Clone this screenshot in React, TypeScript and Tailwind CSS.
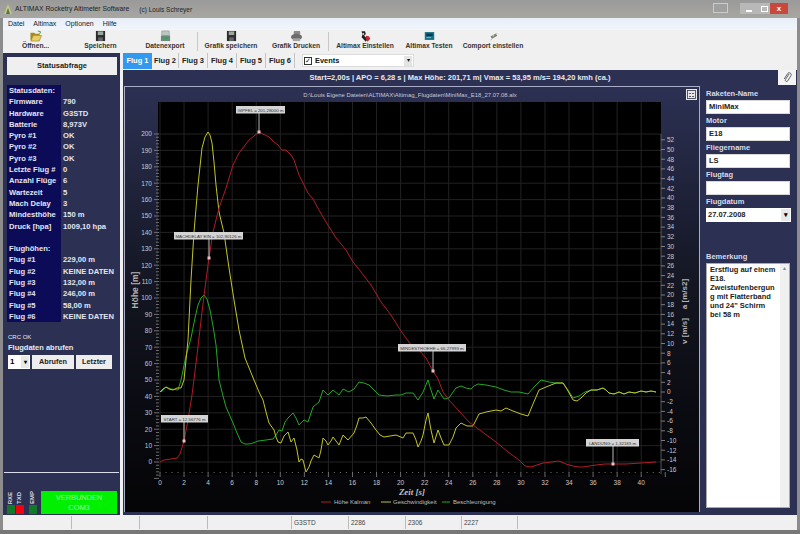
import React from 'react';

const toolbarItems = [
  { label: 'Öffnen...', icon: 'open', w: 'w-[65px]' },
  { label: 'Speichern', icon: 'save', w: 'w-[65px]' },
  { label: 'Datenexport', icon: 'export', w: 'w-[64px]' },
  { label: 'Grafik speichern', icon: 'save', w: 'w-[66px]', sep: true },
  { label: 'Grafik Drucken', icon: 'print', w: 'w-[64px]' },
  { label: 'Altimax Einstellen', icon: 'setup', w: 'w-[72px]', sep: true },
  { label: 'Altimax Testen', icon: 'test', w: 'w-[56px]' },
  { label: 'Comport einstellen', icon: 'port', w: 'w-[72px]' },
];

const statusRows: [string, string][] = [
  ['Statusdaten:', ''],
  ['Firmware', '790'],
  ['Hardware', 'G3STD'],
  ['Batterie', '8,973V'],
  ['Pyro #1', 'OK'],
  ['Pyro #2', 'OK'],
  ['Pyro #3', 'OK'],
  ['Letzte Flug #', '0'],
  ['Anzahl Flüge', '6'],
  ['Wartezeit', '5'],
  ['Mach Delay', '3'],
  ['Mindesthöhe', '150 m'],
  ['Druck [hpa]', '1009,10 hpa'],
  ['', ''],
  ['Flughöhen:', ''],
  ['Flug #1', '229,00 m'],
  ['Flug #2', 'KEINE DATEN'],
  ['Flug #3', '132,00 m'],
  ['Flug #4', '246,00 m'],
  ['Flug #5', '58,00 m'],
  ['Flug #6', 'KEINE DATEN'],
];

const fields = [
  { label: 'Raketen-Name', value: 'MiniMax' },
  { label: 'Motor', value: 'E18' },
  { label: 'Fliegername', value: 'LS' },
  { label: 'Flugtag', value: '' },
];

const remark = ['Erstflug auf einem', 'E18.', 'Zweistufenbergun', 'g mit Flatterband', 'und 24" Schirm', 'bei 58 m'];

// kurven in pixel-koordinaten des screenshots
const red =
  '159,462 163,460 170,459 176,458 179,454 183,441 187,420 191,395 196,355 201,312 205,280 208,258 212,232 218,208 225,188 232,165 238,153 248,140 258,132 268,137 273,142 277,145 281,150 285,150 290,155 293,160 298,175 302,183 307,193 312,199 318,210 325,222 335,238 345,250 352,262 360,272 370,285 380,302 390,315 400,331 410,345 418,350 425,358 432,371 437,379 442,392 448,400 458,411 468,422 480,431 495,442 507,452 518,460 524,466 530,467 536,465 542,463 550,462 558,461 565,464 572,466 578,467 582,467 588,466 595,465 604,464 612,464 625,464 640,463 655,462';
const yellow =
  '159,392 162,389 165,387 168,389 172,390 176,388 180,388 183,380 187,340 190,280 193,232 197,185 201,148 204,137 207,132 209,135 211,143 213,162 215,185 218,212 223,233 228,268 233,300 238,330 244,358 253,380 258,392 262,400 265,412 268,423 273,430 275,437 277,442 280,443 283,436 287,432 290,442 293,438 296,450 298,462 300,459 302,460 304,468 305,472 308,467 310,461 313,455 318,458 320,450 322,438 325,441 327,445 330,441 332,437 335,441 338,445 342,435 347,440 353,433 356,425 358,418 362,418 365,417 370,423 375,430 379,435 383,437 389,436 395,435 402,438 405,433 412,433 415,440 417,447 420,441 422,435 425,420 427,413 430,430 433,443 437,430 440,438 443,445 448,445 452,437 455,428 460,423 466,426 472,426 475,420 478,414 485,412 495,410 500,411 505,408 512,411 520,414 527,416 532,404 538,390 545,387 555,383 562,383 567,391 572,400 576,401 580,398 585,393 590,390 596,390 602,388 605,390 608,393 613,394 618,392 623,394 628,392 634,393 640,391 645,392 650,391 655,392';
const green =
  '160,392 165,387 170,389 177,390 180,380 185,356 190,338 194,318 197,305 200,298 203,295 206,299 209,310 212,326 215,345 218,380 222,396 225,407 232,423 236,433 240,442 244,444 248,444 252,443 257,441 265,440 272,439 275,435 278,430 281,431 284,422 287,418 292,413 295,418 298,425 303,420 307,422 312,407 318,402 322,390 327,395 332,390 338,395 342,389 348,392 353,389 358,382 363,383 368,385 373,390 378,395 386,396 395,395 400,395 405,393 412,393 417,400 422,392 427,380 430,390 433,399 437,390 443,399 448,398 452,392 455,388 460,386 465,388 470,389 473,386 477,384 485,385 495,387 503,390 510,392 518,392 527,394 533,387 540,380 548,382 555,383 562,383 567,390 572,398 578,396 584,392 590,390 596,390 602,388 605,390 608,393 613,394 618,392 623,394 628,392 634,393 640,391 645,392 650,391 655,392';

const callouts = [
  { text: 'GIPFEL = 201,28000 m', x: 235, y: 106, w: 49, px: 258, py: 132 },
  { text: 'MACHDELAY EIN = 102,90126 m', x: 173, y: 232, w: 69, px: 208, py: 258 },
  { text: 'START = 12,56776 m', x: 160, y: 415, w: 47, px: 183, py: 441 },
  { text: 'MINDESTHOEHE = 66,27993 m', x: 397, y: 344, w: 68, px: 432, py: 371 },
  { text: 'LANDUNG = 1,32183 m', x: 585, y: 439, w: 53, px: 612, py: 464 },
];

const XS = Array.from({ length: 21 }, (_, i) => i * 2);
const LEFT = Array.from({ length: 21 }, (_, i) => i * 10);
const RIGHT = Array.from({ length: 35 }, (_, i) => -16 + i * 2);
const px = (s: number) => 159 + s * 12.03;
const pyL = (m: number) => 462 - m * 1.64;
const pyR = (v: number) => 392 - v * 4.85;

function ToolIcon({ name }: { name: string }) {
  if (name === 'open')
    return (
      <svg width="14" height="12" viewBox="0 0 14 13">
        <path d="M1 3h4l1 1h5v2H4L2 11H1z" fill="#a8891f" />
        <path d="M4 6h9l-2.5 6H1.5z" fill="#e8d060" stroke="#8a7420" strokeWidth=".6" />
        <path d="M9 1l3 1-1 2" fill="none" stroke="#3a9a3a" strokeWidth="1" />
      </svg>
    );
  if (name === 'save')
    return (
      <svg width="11" height="12" viewBox="0 0 12 13">
        <rect x="1" y="1" width="10" height="11" fill="#2c2c2c" />
        <rect x="3" y="1.5" width="6" height="4" fill="#9aa8a0" />
        <rect x="3.5" y="8" width="5" height="4" fill="#666" />
      </svg>
    );
  if (name === 'export')
    return (
      <svg width="11" height="12" viewBox="0 0 12 13">
        <rect x="2" y="1" width="8" height="5" fill="#b8c8c0" stroke="#777" strokeWidth=".5" />
        <rect x="1" y="6" width="10" height="6" fill="#6f8a7c" />
        <rect x="3" y="8" width="6" height="2" fill="#3f9a6a" />
      </svg>
    );
  if (name === 'print')
    return (
      <svg width="13" height="12" viewBox="0 0 14 13">
        <rect x="4" y="1" width="7" height="4" rx="1" fill="#8a8a8a" />
        <ellipse cx="7" cy="7.5" rx="6" ry="3.5" fill="#6c6c6c" />
        <rect x="3" y="9" width="8" height="3" fill="#a4a4a4" />
      </svg>
    );
  if (name === 'setup')
    return (
      <svg width="12" height="13" viewBox="0 0 14 14">
        <path d="M3 1h4l1 3-2 2 4 4-2 3-5-5 1-3z" fill="#222" />
        <path d="M8 6l4 1 1 3-3 3-2-3z" fill="#c8242a" />
        <path d="M4 3h2v2H4z" fill="#ddd" />
      </svg>
    );
  if (name === 'test')
    return (
      <svg width="11" height="10" viewBox="0 0 14 12">
        <rect x="1" y="1" width="12" height="10" fill="#16708a" />
        <rect x="3" y="3" width="8" height="3" fill="#0c3a4c" />
        <path d="M3 8h6" stroke="#7fd0e0" />
      </svg>
    );
  return (
    <svg width="11" height="9" viewBox="0 0 14 12">
      <path d="M3 6l7-4 2 3-7 4z" fill="#7a8070" />
      <path d="M5 9l-2 2M10 3l2-1" stroke="#b0b0a0" />
      <rect x="6" y="4" width="2" height="2" fill="#c0d060" />
    </svg>
  );
}

function Chart() {
  return (
    <svg viewBox="124 87 574 425" className="block h-[425px] w-[574px]" fontFamily="Liberation Sans, Arial, sans-serif">
      <rect x="157" y="102" width="503" height="373" fill="#000" />
      {XS.map((s) => (
        <line key={s} x1={px(s)} x2={px(s)} y1="102" y2="473" stroke="#222" strokeWidth="1" />
      ))}
      {LEFT.map((m) => (
        <line key={m} x1="157" x2="660" y1={pyL(m)} y2={pyL(m)} stroke="#222" strokeWidth="1" />
      ))}
      {/* achsen */}
      {Array.from({ length: 106 }, (_, i) => (
        <line key={i} x1={i % 5 === 0 ? 153 : 155} x2="158" y1={pyL(-10 + i * 2)} y2={pyL(-10 + i * 2)} stroke="#999" strokeWidth=".7" />
      ))}
      {Array.from({ length: 85 }, (_, i) => (
        <line key={i} x1={px(i / 2)} x2={px(i / 2)} y1={i % 4 === 0 ? 477 : 473} y2="472" stroke="#888" strokeWidth=".8" />
      ))}
      {RIGHT.map((v) => (
        <line key={v} x1="660" x2="664" y1={pyR(v)} y2={pyR(v)} stroke="#aaa" strokeWidth=".7" />
      ))}
      <line x1="660" x2="660" y1="134" y2="474" stroke="#777" strokeWidth=".7" />
      {LEFT.map((m) => (
        <text key={m} x="151" y={pyL(m) + 2.3} textAnchor="end" fontSize="6.5" fill="#c8c8c8">
          {m}
        </text>
      ))}
      {XS.map((s) => (
        <text key={s} x={px(s)} y="485" textAnchor="middle" fontSize="6.5" fill="#c8c8c8">
          {s}
        </text>
      ))}
      {RIGHT.map((v) => (
        <text key={v} x="666" y={pyR(v) + 2.3} fontSize="6.5" fill="#c8c8c8">
          {v}
        </text>
      ))}
      <polyline points={green} fill="none" stroke="#22a822" strokeWidth="1" />
      <polyline points={yellow} fill="none" stroke="#c4c428" strokeWidth="1" />
      <polyline points={red} fill="none" stroke="#b01c28" strokeWidth="1" />
      {callouts.map((c) => (
        <g key={c.text}>
          <line x1={c.px} x2={c.px} y1={c.y + 7} y2={c.py} stroke="#b8b8b8" strokeWidth="1" />
          <rect x={c.x} y={c.y} width={c.w} height="7.5" fill="#d4d4d4" />
          <text x={c.x + c.w / 2} y={c.y + 5.6} textAnchor="middle" fontSize="4.4" fill="#333">
            {c.text}
          </text>
          <rect x={c.px - 1.5} y={c.py - 1.5} width="3" height="3" fill="#f0c0c0" />
        </g>
      ))}
      <text x="137" y="290" textAnchor="middle" fontSize="8.5" fontWeight="bold" fill="#b4b4b4" transform="rotate(-90 137 290)">
        Höhe [m]
      </text>
      <text x="686" y="294" textAnchor="middle" fontSize="8" fontWeight="bold" fill="#b4b4b4" transform="rotate(-90 686 294)">
        a [m/s2]
      </text>
      <text x="686" y="331" textAnchor="middle" fontSize="8" fontWeight="bold" fill="#b4b4b4" transform="rotate(-90 686 331)">
        v [m/s]
      </text>
      <text x="411" y="495" textAnchor="middle" fontSize="9" fontStyle="italic" fontWeight="bold" fontFamily="Liberation Serif, serif" fill="#c0c0c0">
        Zeit [s]
      </text>
      <line x1="320" x2="330" y1="502" y2="502" stroke="#b01c28" />
      <text x="333" y="504" fontSize="6" fill="#bdbdbd">Höhe Kalman</text>
      <line x1="380" x2="390" y1="502" y2="502" stroke="#c4c428" />
      <text x="392" y="504" fontSize="6" fill="#bdbdbd">Geschwindigkeit</text>
      <line x1="441" x2="449" y1="502" y2="502" stroke="#22a822" />
      <text x="452" y="504" fontSize="6" fill="#bdbdbd">Beschleunigung</text>
    </svg>
  );
}

export default function App() {
  return (
    <div className="flex h-[534px] w-[800px] flex-col overflow-hidden bg-[#8c8c8c] font-['Liberation_Sans',Arial,sans-serif] text-[8px]">
      {/* titelleiste */}
      <div className="flex h-[18px] items-center bg-linear-to-b from-[#9a9a9a] to-[#a8a6a0] pl-[4px] pr-[12px]">
        <svg width="8" height="10" viewBox="0 0 8 10">
          <path d="M4 0l4 10H0z" fill="#c8c880" />
          <path d="M4 4l2 6H2z" fill="#4a7a4a" />
        </svg>
        <span className="ml-[3px] mt-px text-[6.8px] text-[#222]">ALTIMAX Rocketry Altimeter Software</span>
        <span className="ml-[10px] mt-px text-[6.5px] text-[#222]">(c) Louis Schreyer</span>
        <div className="ml-auto flex h-[12px] items-start">
          <div className="mr-[12px] h-[10px] w-[15px] border border-[#ccc] bg-[#a0a0a0]" />
          <div className="flex h-[11px] w-[18px] items-center justify-center bg-[#b8b8b8]">
            <div className="mt-[4px] h-[2px] w-[6px] bg-white" />
          </div>
          <div className="flex h-[11px] w-[12px] items-center justify-center bg-[#b8b8b8]">
            <div className="h-[6px] w-[7px] border border-white" />
          </div>
          <div className="flex h-[11px] w-[18px] items-center justify-center bg-[#c9483c] text-[8px] font-bold text-white">x</div>
        </div>
      </div>

      <div className="mx-[3px] flex flex-1 flex-col bg-[#f0f0f0]">
        {/* menü */}
        <div className="flex h-[12px] items-center gap-[9px] bg-linear-to-b from-[#e8eef8] to-[#f2f5fb] pl-[5px] text-[7px] text-[#222]">
          <span>Datei</span>
          <span>Altimax</span>
          <span>Optionen</span>
          <span>Hilfe</span>
        </div>

        {/* werkzeugleiste */}
        <div className="flex h-[23px] items-stretch">
          {toolbarItems.map((t) => (
            <React.Fragment key={t.label}>
              {t.sep && <div className="my-[2px] w-px bg-[#c8c8c8]" />}
              <div className={`${t.w} flex flex-col items-center justify-start`}>
                <div className="flex h-[12px] items-center">
                  <ToolIcon name={t.icon} />
                </div>
                <span className="whitespace-nowrap text-[6.7px] font-bold leading-[7px] text-[#333]">{t.label}</span>
              </div>
            </React.Fragment>
          ))}
        </div>

        {/* hauptbereich */}
        <div className="flex h-[462px]">
          {/* linke spalte */}
          <div className="flex w-[117px] flex-col bg-[#2c3154] text-white">
            <div className="ml-[4px] mt-[4px] flex h-[18px] w-[110px] items-center justify-center bg-[#efefef] text-[7.5px] font-bold text-[#222]">
              Statusabfrage
            </div>
            <div className="ml-[4px] mt-[10px] w-[110px]">
              {statusRows.map(([k, v], i) => (
                <div key={i} className="grid h-[11.3px] grid-cols-[54px_1fr] text-[7.6px] font-bold leading-[11.3px]">
                  <div className="whitespace-nowrap bg-[#0b0b58] pl-[2px] text-[#e4e4f0]">{k}</div>
                  <div className="whitespace-nowrap pl-[2px] text-[#e4e4f0]">{v}</div>
                </div>
              ))}
            </div>
            <div className="ml-[5px] mt-[10px] text-[6px] leading-[10px] text-[#e8e8f0]">CRC OK</div>
            <div className="ml-[5px] text-[7.5px] font-bold leading-[11px] text-[#e8e8f0]">Flugdaten abrufen</div>
            <div className="ml-[5px] mt-[2px] flex h-[14px] items-stretch">
              <div className="flex w-[22px] items-center justify-between bg-white pl-[2px] pr-[1px] text-[8px] font-bold text-black">
                1
                <span className="flex h-[12px] w-[8px] items-center justify-center bg-[#e8e8e8] text-[6px]">▾</span>
              </div>
              <div className="ml-[2px] flex w-[42px] items-center justify-center bg-[#ededed] text-[7.3px] font-bold text-[#222]">Abrufen</div>
              <div className="ml-[2px] flex w-[36px] items-center justify-center bg-[#ededed] text-[7.3px] font-bold text-[#222]">Letzter</div>
            </div>
            <div className="mt-auto">
              <div className="mx-px h-px bg-[#d8dcec]" />
              <div className="flex h-[42px] items-end px-[3px] pb-[1px]">
                {[
                  { t: 'RXE', c: 'bg-[#107a28]', w: 'w-[9px]' },
                  { t: 'TXD', c: 'bg-[#f00010]', w: 'w-[9px]' },
                  { t: 'EMP', c: 'bg-[#107a28]', w: 'ml-[4px] w-[9px]' },
                ].map((l) => (
                  <div key={l.t} className={`${l.w} flex flex-col items-center`}>
                    <span className="rotate-180 text-[6px] font-bold leading-[9px] text-[#ddd] [writing-mode:vertical-rl]">{l.t}</span>
                    <div className={`mt-px h-[9px] w-[8px] ${l.c}`} />
                  </div>
                ))}
                <div className="ml-[4px] flex h-[23px] w-[77px] flex-col items-center justify-center bg-[#00f000] text-[7.4px] leading-[9.5px] text-[#9cff9c]">
                  <span>VERBUNDEN</span>
                  <span>COM3</span>
                </div>
              </div>
            </div>
          </div>

          <div className="w-[3px]" />

          {/* rechte spalte */}
          <div className="flex w-[674px] flex-col">
            {/* reiter */}
            <div className="flex h-[17px] items-start">
              <div className="flex h-[16px] w-[29px] items-center justify-center bg-[#3399ee] text-[7.5px] font-bold text-white">Flug 1</div>
              {[
                { t: 'Flug 2', w: 'w-[27px]' },
                { t: 'Flug 3', w: 'w-[29px]' },
                { t: 'Flug 4', w: 'w-[29px]' },
                { t: 'Flug 5', w: 'w-[29px]' },
                { t: 'Flug 6', w: 'w-[29px]' },
              ].map((f) => (
                <div key={f.t} className={`${f.w} flex h-[15px] items-center justify-center border-r border-[#c4c4c4] text-[7.5px] font-bold text-[#222]`}>
                  {f.t}
                </div>
              ))}
              <div className="ml-[7px] mt-px flex h-[13px] w-[112px] items-center border border-[#ddd] bg-white text-[7.4px] text-[#111]">
                <span className="mx-[1px] flex h-[8px] w-[8px] items-center justify-center border border-[#333] text-[7px] leading-none">✓</span>
                <span className="ml-[2px] font-bold">Events</span>
                <span className="ml-auto mr-px flex h-[10px] w-[8px] items-center justify-center bg-[#e4e4e4] text-[6px]">▾</span>
              </div>
            </div>

            <div className="flex flex-1 flex-col bg-[#2c3154]">
              {/* kopfzeile */}
              <div className="relative flex h-[16px] items-center justify-center text-[7.5px] font-bold text-[#e8e8f0]">
                Start=2,00s | APO = 6,28 s | Max Höhe: 201,71 m| Vmax = 53,95 m/s= 194,20 kmh (ca.)
                <div className="absolute right-[1px] top-0 flex h-[15px] w-[18px] items-center justify-center bg-[#f4f4f4]">
                  <svg width="9" height="11" viewBox="0 0 9 11" fill="none" stroke="#555" strokeWidth=".9">
                    <path d="M6 2L2.5 7.5a1.3 1.3 0 0 0 2.2 1.4L8 3.6A2 2 0 0 0 4.7 1.4L1.2 7" />
                  </svg>
                </div>
              </div>
              <div className="flex flex-1 items-start">
                {/* diagramm */}
                <div className="relative ml-px h-[426px] w-[576px] border-x border-t border-[#a9adc6] bg-linear-to-b from-[#2c3154] via-[#12141f] to-[#050507]">
                  <div className="absolute left-0 right-[4px] top-[4px] text-center text-[5.9px] text-[#c6c8d6]">
                    D:\Louis Eigene Dateien\ALTIMAX\Altimag_Flugdaten\MiniMax_E18_27.07.08.alx
                  </div>
                  <div className="absolute right-[2px] top-[2px] flex h-[11px] w-[11px] items-center justify-center bg-[#e8e8e8]">
                    <svg width="9" height="9" viewBox="0 0 9 9" fill="none" stroke="#334" strokeWidth=".8">
                      <rect x=".5" y=".5" width="8" height="8" />
                      <path d="M2 3l1 1 1-1M5 3l1 1 1-1M2 7l1-1 1 1M5 7l1-1 1 1" />
                    </svg>
                  </div>
                  <Chart />
                </div>

                {/* eingabefelder */}
                <div className="ml-[6px] flex w-[90px] flex-col pt-px text-[7.5px] font-bold">
                  {fields.map((f) => (
                    <React.Fragment key={f.label}>
                      <div className="h-[13px] leading-[14px] text-[#d8dae8]">{f.label}</div>
                      <div className="h-[14px] w-[84px] border border-[#d8d8d8] bg-white pl-[2px] leading-[12px] text-[#222]">{f.value}</div>
                    </React.Fragment>
                  ))}
                  <div className="h-[13px] leading-[14px] text-[#d8dae8]">Flugdatum</div>
                  <div className="flex h-[14px] w-[85px] items-center justify-between bg-white pl-[2px] pr-px text-[#222]">
                    27.07.2008
                    <span className="flex h-[12px] w-[9px] items-center justify-center bg-[#e8e8e8] text-[7px] text-black">▾</span>
                  </div>
                  <div className="mt-[29px] h-[12px] leading-[12px] text-[#d8dae8]">Bemerkung</div>
                  <div className="flex h-[245px] w-[84px] border border-[#aaa] bg-white">
                    <div className="w-[74px] pl-[3px] pt-px text-[#222]">
                      {remark.map((l) => (
                        <div key={l} className="h-[9px] whitespace-nowrap leading-[9px]">
                          {l}
                        </div>
                      ))}
                    </div>
                    <div className="flex w-[9px] justify-center bg-[#f0f0f0] text-[5px] leading-[8px] text-[#888]">▲</div>
                  </div>
                </div>
              </div>
            </div>
          </div>
        </div>

        {/* statusleiste */}
        <div className="flex h-[15px] items-center text-[6.5px] text-[#444]">
          {[
            ['', 'w-[69px]'],
            ['', 'w-[68px]'],
            ['', 'w-[68px]'],
            ['', 'w-[84px]'],
            ['G3STD', 'w-[57px]'],
            ['2286', 'w-[57px]'],
            ['2306', 'w-[56px]'],
            ['2227', 'w-[56px]'],
          ].map(([t, w], i) => (
            <div key={i} className={`${w} h-[13px] border-r border-[#bbb] pl-[2px] leading-[13px]`}>
              {t}
            </div>
          ))}
        </div>
      </div>
      <div className="h-[4px] bg-[#777]" />
    </div>
  );
}
